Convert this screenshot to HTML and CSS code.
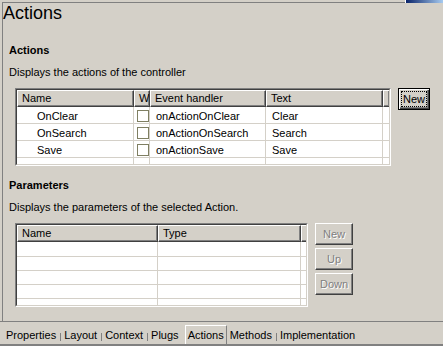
FILE: index.html
```html
<!DOCTYPE html>
<html lang="en">

<head>
    <meta charset="UTF-8">
    <title>Actions</title>
    <link rel="stylesheet" href="styles.css">
</head>

<body>
    <div class="top">
        <div class="edge"></div>
        <div class="caption"></div>
    </div>

    <div class="editor">
        <h1 class="title">Actions</h1>

        <div class="group first">
            <h2>Actions</h2>
            <p>Displays the actions of the controller</p>

            <div class="row">
                <div class="table">
                    <div class="table-in actions">
                        <div class="hd">Name</div>
                        <div class="hd">W</div>
                        <div class="hd">Event handler</div>
                        <div class="hd">Text</div>
                        <div class="hd"></div>

                        <div class="cell name">OnClear</div>
                        <div class="cell check"><span class="box"></span></div>
                        <div class="cell">onActionOnClear</div>
                        <div class="cell">Clear</div>
                        <div class="cell"></div>

                        <div class="cell name">OnSearch</div>
                        <div class="cell check"><span class="box"></span></div>
                        <div class="cell">onActionOnSearch</div>
                        <div class="cell">Search</div>
                        <div class="cell"></div>

                        <div class="cell name">Save</div>
                        <div class="cell check"><span class="box"></span></div>
                        <div class="cell">onActionSave</div>
                        <div class="cell">Save</div>
                        <div class="cell"></div>

                        <div class="cell"></div>
                        <div class="cell"></div>
                        <div class="cell"></div>
                        <div class="cell"></div>
                        <div class="cell"></div>
                    </div>
                </div>

                <div class="buttons">
                    <button class="btn default"><span>New</span></button>
                </div>
            </div>
        </div>

        <div class="group second">
            <h2>Parameters</h2>
            <p>Displays the parameters of the selected Action.</p>

            <div class="row">
                <div class="table">
                    <div class="table-in params">
                        <div class="hd">Name</div>
                        <div class="hd">Type</div>
                        <div class="hd"></div>

                        <div class="cell"></div><div class="cell"></div><div class="cell"></div>
                        <div class="cell"></div><div class="cell"></div><div class="cell"></div>
                        <div class="cell"></div><div class="cell"></div><div class="cell"></div>
                        <div class="cell"></div><div class="cell"></div><div class="cell"></div>
                        <div class="cell"></div><div class="cell"></div><div class="cell"></div>
                    </div>
                </div>

                <div class="buttons stack">
                    <button class="btn" disabled>New</button>
                    <button class="btn" disabled>Up</button>
                    <button class="btn" disabled>Down</button>
                </div>
            </div>
        </div>
    </div>

    <div class="tabs">
        <span class="tab">Properties</span>
        <span class="sep"></span>
        <span class="tab">Layout</span>
        <span class="sep"></span>
        <span class="tab">Context</span>
        <span class="sep"></span>
        <span class="tab">Plugs</span>
        <span class="tab active">Actions</span>
        <span class="tab">Methods</span>
        <span class="sep"></span>
        <span class="tab">Implementation</span>
    </div>
</body>

</html>
```

FILE: styles.css
```css
* {
    margin: 0;
    padding: 0;
    box-sizing: border-box;
}

body {
    width: 443px;
    height: 346px;
    overflow: hidden;
    background: #d4d0c8;
    font-family: "Liberation Sans", Arial, sans-serif;
    font-size: 11px;
    color: #000;
}

/* window chrome */

.top {
    display: flex;
    height: 3px;
}

.top .edge {
    flex: 1;
    margin-left: 2px;
    border-bottom: 1px solid #808080;
}

.top .caption {
    width: 38px;
    border-left: 1px solid #fff;
    background: linear-gradient(90deg, #0a246a, #a6caf0);
}

.editor {
    height: 318px;
    margin-left: 2px;
    border-left: 1px solid #808080;
}

.title {
    font-size: 18px;
    font-weight: normal;
    line-height: 20px;
}

/* groups */

.group {
    padding-left: 6px;
}

.group h2 {
    font-size: 11px;
    line-height: 13px;
}

.group p {
    line-height: 13px;
    margin-top: 9px;
}

.group.first {
    margin-top: 21px;
}

.group.second {
    margin-top: 13px;
}

.row {
    display: flex;
    align-items: flex-start;
    margin-top: 9px;
    padding-left: 6px;
}

/* tables */

.table {
    border: 1px solid;
    border-color: #808080 #fff #fff #808080;
}

.table-in {
    display: grid;
    overflow: hidden;
    background: #fff;
    border: 1px solid;
    border-color: #404040 #d4d0c8 #d4d0c8 #404040;
}

.actions {
    width: 374px;
    height: 76px;
    grid-template-columns: 117px 16px 116px 117px 1fr;
    grid-template-rows: 17px;
    grid-auto-rows: 17px;
}

.params {
    width: 291px;
    height: 82px;
    grid-template-columns: 141px 143px 1fr;
    grid-template-rows: 17px 15px;
    grid-auto-rows: 14px;
}

.hd {
    background: #d4d0c8;
    border-top: 1px solid #fff;
    border-left: 1px solid #fff;
    border-right: 1px solid #404040;
    border-bottom: 1px solid #404040;
    box-shadow: inset -1px -1px 0 #808080;
    padding-left: 4px;
    line-height: 14px;
    white-space: nowrap;
    overflow: hidden;
}

.cell {
    border-right: 1px solid #d4d0c8;
    border-bottom: 1px solid #d4d0c8;
    padding-left: 6px;
    line-height: 16px;
    padding-top: 1px;
    white-space: nowrap;
    overflow: hidden;
}

.cell.name {
    padding-left: 20px;
}

.cell.check {
    padding: 3px 0 0 3px;
}

.box {
    display: block;
    width: 12px;
    height: 12px;
    border: 1px solid #7f7f62;
    background: #fff;
}

/* buttons */

.buttons {
    display: flex;
    flex-direction: column;
    gap: 3px;
    margin-left: 7px;
}

.btn {
    width: 38px;
    height: 22px;
    font-family: inherit;
    font-size: 11px;
    background: #d4d0c8;
    border: 1px solid;
    border-color: #fff #404040 #404040 #fff;
    box-shadow: inset -1px -1px 0 #808080;
}

.btn:disabled {
    color: #808080;
    text-shadow: 1px 1px 0 #fff;
}

.btn.default {
    width: 32px;
    border: 1px solid #000;
    box-shadow: inset 1px 1px 0 #fff, inset -1px -1px 0 #404040, inset -2px -2px 0 #808080;
    color: #000;
}

.btn.default span {
    display: block;
    margin: 0 2px;
    padding: 1px 0;
    border: 1px dotted #000;
}

/* bottom tabs */

.tabs {
    display: flex;
    align-items: flex-end;
    height: 25px;
    border-top: 1px solid #808080;
    border-bottom: 2px solid #808080;
    padding-left: 5px;
}

.tab {
    padding: 0 1px 2px;
    line-height: 14px;
    border: 1px solid transparent;
    border-bottom: none;
    border-left: none;
    border-right: none;
}

.tab.active {
    height: 19px;
    padding: 2px 2px 0;
    margin: 0 2px 0 5px;
    border: 1px solid;
    border-color: #fff #808080 #fff #fff;
    border-bottom: none;
}

.sep {
    width: 1px;
    height: 8px;
    margin: 0 2px 3px 3px;
    background: #808080;
}
```
